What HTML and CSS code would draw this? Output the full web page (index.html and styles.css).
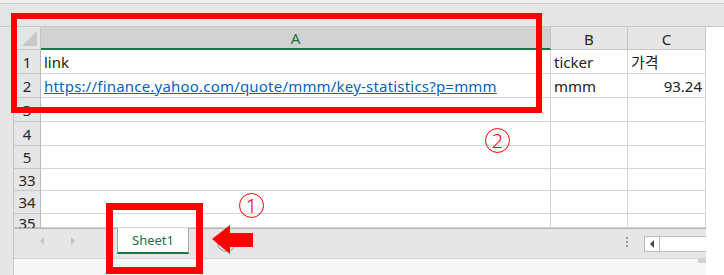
FILE: index.html
```html
<!DOCTYPE html>
<html lang="ko">
<head>
    <meta charset="UTF-8">
    <title>Sheet1</title>
    <link rel="stylesheet" href="styles.css">
</head>
<body>
    <div class="ribbon-edge"></div>
    <div class="workbook">
        <div class="gutter"></div>
        <div class="sheet">
            <div class="grid">
                <div class="corner"><span class="tri"></span></div>
                <div class="colhead active">A</div>
                <div class="colhead">B</div>
                <div class="colhead">C</div>

                <div class="rowhead">1</div>
                <div class="cell">link</div>
                <div class="cell">ticker</div>
                <div class="cell">가격</div>

                <div class="rowhead">2</div>
                <div class="cell"><a class="link" href="#">https://finance.yahoo.com/quote/mmm/key-statistics?p=mmm</a></div>
                <div class="cell">mmm</div>
                <div class="cell num">93.24</div>

                <div class="rowhead">3</div>
                <div class="cell"></div><div class="cell"></div><div class="cell"></div>
                <div class="rowhead">4</div>
                <div class="cell"></div><div class="cell"></div><div class="cell"></div>
                <div class="rowhead">5</div>
                <div class="cell"></div><div class="cell"></div><div class="cell"></div>
                <div class="rowhead">33</div>
                <div class="cell"></div><div class="cell"></div><div class="cell"></div>
                <div class="rowhead">34</div>
                <div class="cell"></div><div class="cell"></div><div class="cell"></div>
                <div class="rowhead cut">35</div>
                <div class="cell"></div><div class="cell"></div><div class="cell"></div>
            </div>

            <div class="tabbar">
                <span class="nav prev"></span>
                <span class="nav next"></span>
                <div class="tab">Sheet1</div>
                <span class="addsheet"></span>
                <span class="grip"><i></i><i></i><i></i></span>
                <div class="hscroll">
                    <span class="hbtn"><span class="hleft"></span></span>
                </div>
            </div>
            <div class="status"><span class="corner-chip"></span></div>
        </div>
    </div>

    <!-- annotations drawn over the screenshot -->
    <div class="box box-grid"></div>
    <div class="box box-tab"></div>
    <div class="mark mark-1">1</div>
    <div class="mark mark-2">2</div>
    <svg class="arrow" width="44" height="32" viewBox="0 0 44 32">
        <polygon points="0,14 18,0 18,8 41,8 41,22 18,22 18,29" fill="#ff0000"/>
    </svg>
</body>
</html>
```

FILE: styles.css
```css
* {
    box-sizing: border-box;
}
body {
    margin: 0;
    width: 724px;
    height: 275px;
    overflow: hidden;
    position: relative;
    background-color: #fff;
    font-family: "Noto Sans", "Noto Sans CJK KR", sans-serif;
    color: #222;
}
.ribbon-edge {
    height: 27px;
    background-color: #e6e6e6;
    border-top: 3px solid #efefef;
    box-shadow: inset 0 1px 0 #d0d0d0;
    border-bottom: 1px solid #c8c8c8;
}
.workbook {
    display: flex;
    height: 248px;
}
.gutter {
    width: 14px;
    background-color: #e6e6e6;
    border-right: 1px solid #c6c6c6;
}
.sheet {
    width: 692px;
    display: flex;
    flex-direction: column;
}
.grid {
    display: grid;
    grid-template-columns: 27px 510px 77px 78px;
    grid-template-rows: 23px 24px 24px 24px 24px 23px 22px 23px 14px;
    height: 201px;
    overflow: hidden;
}
.corner, .colhead, .rowhead {
    background-color: #e6e6e6;
    border-right: 1px solid #c6c6c6;
    border-bottom: 1px solid #c6c6c6;
}
.corner {
    position: relative;
}
.tri {
    position: absolute;
    right: 3px;
    bottom: 3px;
    width: 0;
    height: 0;
    border-left: 15px solid transparent;
    border-bottom: 15px solid #c8c8c8;
}
.colhead {
    display: flex;
    align-items: center;
    justify-content: center;
    font-size: 15px;
    color: #262626;
    padding-top: 1px;
}
.colhead.active {
    background-color: #d2d2d2;
    border-bottom: 2px solid #217346;
    color: #217346;
}
.rowhead {
    display: flex;
    align-items: center;
    justify-content: center;
    font-size: 15px;
    color: #262626;
    border-right-color: #b9b9b9;
}
.rowhead.cut {
    align-items: flex-start;
    line-height: 18px;
}
.cell {
    border-right: 1px solid #d4d4d4;
    border-bottom: 1px solid #d4d4d4;
    display: flex;
    align-items: center;
    padding: 0 3px;
    font-size: 15px;
    white-space: nowrap;
    overflow: visible;
}
.cell.num {
    justify-content: flex-end;
}
.link {
    color: #0563c1;
    text-decoration: underline;
    letter-spacing: 0.2px;
}
.tabbar {
    height: 31px;
    background-color: #e6e6e6;
    border-top: 1px solid #b4b4b4;
    border-bottom: 1px solid #d4d4d4;
    display: flex;
    align-items: flex-start;
    position: relative;
}
.nav {
    width: 0;
    height: 0;
    margin-top: 8px;
    border-top: 4px solid transparent;
    border-bottom: 4px solid transparent;
}
.prev {
    margin-left: 26px;
    border-right: 4px solid #c4c4c4;
}
.next {
    margin-left: 27px;
    border-left: 4px solid #c4c4c4;
}
.tab {
    margin-left: 42px;
    margin-top: -1px;
    width: 72px;
    height: 26px;
    background-color: #fff;
    border-left: 1px solid #a9a9a9;
    border-right: 1px solid #a9a9a9;
    border-bottom: 2px solid #217346;
    color: #217346;
    font-size: 13px;
    text-align: center;
    line-height: 24px;
}
.addsheet {
    margin-left: 28px;
    margin-top: 4px;
    width: 19px;
    height: 19px;
    border: 1px solid #9a9a9a;
    border-radius: 50%;
}
.grip {
    margin-left: auto;
    margin-top: 8px;
    display: flex;
    flex-direction: column;
    gap: 2px;
}
.grip i {
    display: block;
    width: 2px;
    height: 2px;
    background-color: #9a9a9a;
}
.hscroll {
    margin-left: 16px;
    margin-top: 7px;
    width: 62px;
    height: 16px;
    background-color: #fff;
    border: 1px solid #bcbcbc;
    border-right: none;
}
.hbtn {
    display: flex;
    align-items: center;
    justify-content: center;
    width: 15px;
    height: 14px;
    border-right: 1px solid #bcbcbc;
}
.hleft {
    width: 0;
    height: 0;
    border-top: 4px solid transparent;
    border-bottom: 4px solid transparent;
    border-right: 4px solid #444;
}
.status {
    flex: 1;
    background-color: #f7f7f7;
    position: relative;
}
.corner-chip {
    position: absolute;
    right: 0;
    top: 0;
    width: 8px;
    height: 4px;
    background-color: #cfcfcf;
}

/* red annotations */
.box {
    position: absolute;
    border: 6px solid #ff0000;
}
.box-grid {
    left: 11px;
    top: 13px;
    width: 531px;
    height: 100px;
}
.box-tab {
    left: 106px;
    top: 203px;
    width: 97px;
    height: 71px;
    border-width: 7px;
}
.mark {
    position: absolute;
    width: 25px;
    height: 25px;
    border: 1px solid #ff0000;
    border-radius: 50%;
    color: #ff0000;
    font-size: 20px;
    font-weight: 300;
    line-height: 23px;
    text-align: center;
}
.mark-1 {
    left: 239px;
    top: 193px;
}
.mark-2 {
    left: 485px;
    top: 128px;
}
.arrow {
    position: absolute;
    left: 212px;
    top: 225px;
}
```
